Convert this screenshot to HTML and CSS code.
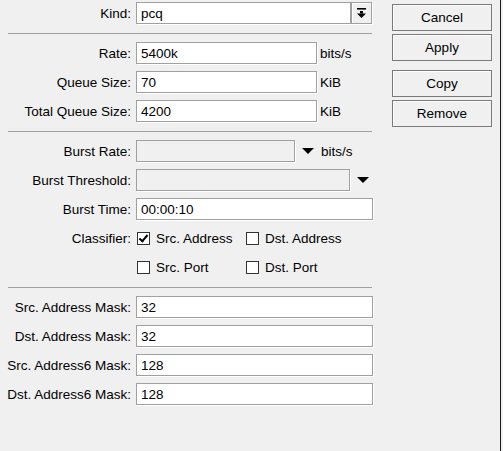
FILE: index.html
```html
<!DOCTYPE html>
<html lang="en">
<head>
    <meta charset="UTF-8">
    <meta name="viewport" content="width=device-width, initial-scale=1.0">
    <title>Queue Type</title>
    <link rel="stylesheet" href="styles.css">
</head>
<body>
    <div class="window">
        <main class="form">
            <div class="row">
                <label class="lbl" for="kind">Kind:</label>
                <div class="field">
                    <input type="text" id="kind" class="inp w-kind" value="pcq">
                    <button type="button" class="drop">
                        <svg width="9" height="10" viewBox="0 0 9 10">
                            <rect x="0" y="0" width="9" height="1.6" fill="#000"/>
                            <rect x="3" y="3" width="3" height="2.5" fill="#000"/>
                            <polygon points="0,5.5 9,5.5 4.5,10" fill="#000"/>
                        </svg>
                    </button>
                </div>
            </div>

            <hr class="sep">

            <div class="row">
                <label class="lbl" for="rate">Rate:</label>
                <div class="field">
                    <input type="text" id="rate" class="inp w-rate" value="5400k">
                    <span class="unit">bits/s</span>
                </div>
            </div>
            <div class="row">
                <label class="lbl" for="qsize">Queue Size:</label>
                <div class="field">
                    <input type="text" id="qsize" class="inp w-rate" value="70">
                    <span class="unit">KiB</span>
                </div>
            </div>
            <div class="row">
                <label class="lbl" for="tqsize">Total Queue Size:</label>
                <div class="field">
                    <input type="text" id="tqsize" class="inp w-rate" value="4200">
                    <span class="unit">KiB</span>
                </div>
            </div>

            <hr class="sep">

            <div class="row">
                <label class="lbl" for="brate">Burst Rate:</label>
                <div class="field">
                    <input type="text" id="brate" class="inp w-burst" disabled>
                    <span class="arrow"></span>
                    <span class="unit after-arrow">bits/s</span>
                </div>
            </div>
            <div class="row">
                <label class="lbl" for="bthresh">Burst Threshold:</label>
                <div class="field">
                    <input type="text" id="bthresh" class="inp w-thresh" disabled>
                    <span class="arrow"></span>
                </div>
            </div>
            <div class="row">
                <label class="lbl" for="btime">Burst Time:</label>
                <div class="field">
                    <input type="text" id="btime" class="inp w-full" value="00:00:10">
                </div>
            </div>
            <div class="row">
                <span class="lbl">Classifier:</span>
                <div class="checks">
                    <label class="check"><span class="box on"></span>Src. Address</label>
                    <label class="check"><span class="box"></span>Dst. Address</label>
                </div>
            </div>
            <div class="row">
                <span class="lbl"></span>
                <div class="checks">
                    <label class="check"><span class="box"></span>Src. Port</label>
                    <label class="check"><span class="box"></span>Dst. Port</label>
                </div>
            </div>

            <hr class="sep">

            <div class="row">
                <label class="lbl" for="sam">Src. Address Mask:</label>
                <div class="field"><input type="text" id="sam" class="inp w-full" value="32"></div>
            </div>
            <div class="row">
                <label class="lbl" for="dam">Dst. Address Mask:</label>
                <div class="field"><input type="text" id="dam" class="inp w-full" value="32"></div>
            </div>
            <div class="row">
                <label class="lbl" for="sam6">Src. Address6 Mask:</label>
                <div class="field"><input type="text" id="sam6" class="inp w-full" value="128"></div>
            </div>
            <div class="row">
                <label class="lbl" for="dam6">Dst. Address6 Mask:</label>
                <div class="field"><input type="text" id="dam6" class="inp w-full" value="128"></div>
            </div>
        </main>

        <aside class="actions">
            <button type="button" class="btn">Cancel</button>
            <button type="button" class="btn">Apply</button>
            <button type="button" class="btn gap">Copy</button>
            <button type="button" class="btn">Remove</button>
        </aside>
    </div>
</body>
</html>
```

FILE: styles.css
```css
/* Window */
body {
    margin: 0;
    background-color: #f0f0f0;
    font-family: "Liberation Sans", Arial, sans-serif;
    font-size: 13.5px;
    color: #000;
}

.window {
    display: flex;
    width: 500px;
    height: 451px;
    border-right: 1px solid #1a1a1a;
}

/* Form column */
.form {
    width: 380px;
    padding-top: 2px;
    display: flex;
    flex-direction: column;
    gap: 7px;
}

.row {
    display: grid;
    grid-template-columns: 131px auto;
    column-gap: 5px;
    align-items: center;
    height: 22px;
}

.lbl {
    text-align: right;
    white-space: nowrap;
}

.field {
    display: flex;
    align-items: center;
    height: 22px;
}

.inp {
    box-sizing: border-box;
    height: 22px;
    margin: 0;
    padding: 0 4px;
    border: 1px solid #a0a0a0;
    box-shadow: 1px 1px 0 #fff;
    background-color: #fff;
    font-family: inherit;
    font-size: 13.5px;
    color: #000;
    outline: none;
}

.inp:disabled {
    background-color: #f0f0f0;
}

.w-kind { width: 215px; }
.w-rate { width: 181px; }
.w-burst { width: 159px; }
.w-thresh { width: 214px; }
.w-full { width: 237px; }

.unit {
    margin-left: 3px;
}

.unit.after-arrow {
    margin-left: 7px;
}

/* Kind drop button */
.drop {
    box-sizing: border-box;
    width: 21px;
    height: 22px;
    margin: 0;
    padding: 0;
    border: 1px solid #a0a0a0;
    box-shadow: inset 1px 1px 0 #fff, 1px 1px 0 #fff;
    background-color: #f0f0f0;
    display: flex;
    align-items: center;
    justify-content: center;
}

/* Small down arrows */
.arrow {
    width: 0;
    height: 0;
    margin-left: 7px;
    border-left: 6px solid transparent;
    border-right: 6px solid transparent;
    border-top: 6px solid #000;
}

/* Classifier checkboxes */
.checks {
    display: grid;
    grid-template-columns: 109px auto;
    padding-left: 1px;
}

.check {
    display: flex;
    align-items: center;
    gap: 6px;
    white-space: nowrap;
}

.box {
    box-sizing: border-box;
    width: 13px;
    height: 13px;
    border: 1px solid #333;
    background-color: #fff;
    position: relative;
}

.box.on::after {
    content: "";
    position: absolute;
    left: 3px;
    top: 0px;
    width: 3px;
    height: 7px;
    border-right: 2px solid #000;
    border-bottom: 2px solid #000;
    transform: rotate(40deg);
}

/* Separators */
.sep {
    margin: 2px 0 1px 8px;
    width: 364px;
    height: 0;
    border: none;
    border-top: 1px solid #a0a0a0;
}

/* Buttons column */
.actions {
    margin-left: 12px;
    padding-top: 4px;
    display: flex;
    flex-direction: column;
    gap: 3px;
}

.btn {
    box-sizing: border-box;
    width: 100px;
    height: 27px;
    margin: 0;
    padding: 0;
    border: 1px solid #7a7a7a;
    box-shadow: inset 1px 1px 0 #fff;
    background-color: #f0f0f0;
    font-family: inherit;
    font-size: 13.5px;
    color: #000;
}

.btn.gap {
    margin-top: 6px;
}
```
